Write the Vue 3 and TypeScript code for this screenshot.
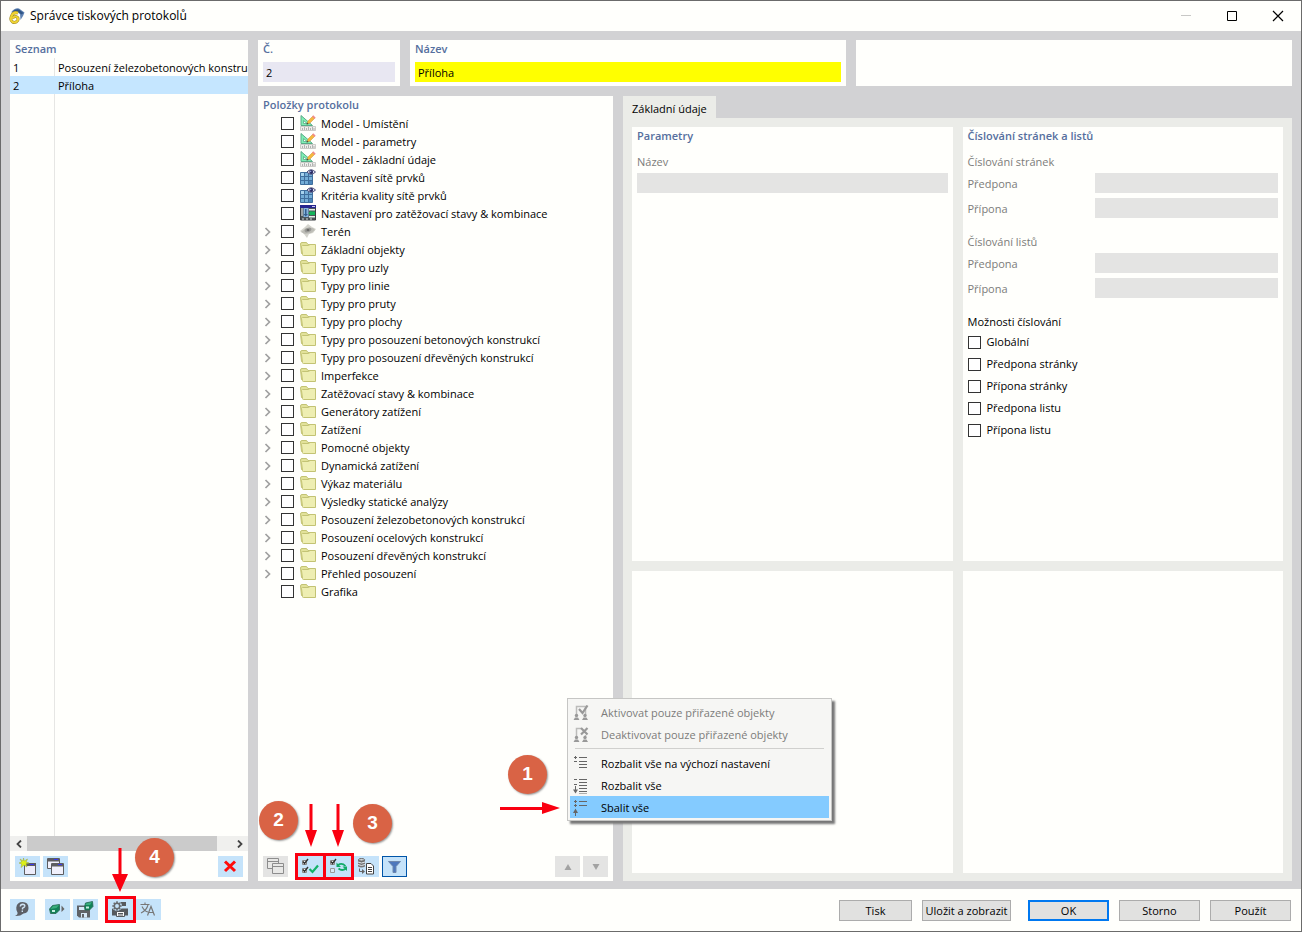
<script setup lang="ts">
import { ref } from 'vue'

interface TreeItem {
  label: string
  icon: string
  expandable: boolean
  checked: boolean
}

interface ReportRow {
  id: number
  name: string
}

const leaf = (label: string, icon: string): TreeItem => ({ label, icon, expandable: false, checked: false })
const branch = (label: string, icon = 'folder'): TreeItem => ({ label, icon, expandable: true, checked: false })

const reports: ReportRow[] = [
  { id: 1, name: 'Posouzení železobetonových konstrukcí' },
  { id: 2, name: 'Příloha' },
]
const selected = ref(2)
const reportName = ref('Příloha')

const items = ref<TreeItem[]>([
  leaf('Model - Umístění', 'model'),
  leaf('Model - parametry', 'model'),
  leaf('Model - základní údaje', 'model'),
  leaf('Nastavení sítě prvků', 'mesh'),
  leaf('Kritéria kvality sítě prvků', 'mesh'),
  leaf('Nastavení pro zatěžovací stavy & kombinace', 'loads'),
  branch('Terén', 'terrain'),
  branch('Základní objekty'),
  branch('Typy pro uzly'),
  branch('Typy pro linie'),
  branch('Typy pro pruty'),
  branch('Typy pro plochy'),
  branch('Typy pro posouzení betonových konstrukcí'),
  branch('Typy pro posouzení dřevěných konstrukcí'),
  branch('Imperfekce'),
  branch('Zatěžovací stavy & kombinace'),
  branch('Generátory zatížení'),
  branch('Zatížení'),
  branch('Pomocné objekty'),
  branch('Dynamická zatížení'),
  branch('Výkaz materiálu'),
  branch('Výsledky statické analýzy'),
  branch('Posouzení železobetonových konstrukcí'),
  branch('Posouzení ocelových konstrukcí'),
  branch('Posouzení dřevěných konstrukcí'),
  branch('Přehled posouzení'),
  leaf('Grafika', 'folder'),
])

const numberingGroups = [
  { id: 'pages', title: 'Číslování stránek' },
  { id: 'sheets', title: 'Číslování listů' },
]
const numberingOptions = ref([
  { label: 'Globální', checked: false },
  { label: 'Předpona stránky', checked: false },
  { label: 'Přípona stránky', checked: false },
  { label: 'Předpona listu', checked: false },
  { label: 'Přípona listu', checked: false },
])
</script>

<template>
  <div class="window">
    <svg class="sprite" aria-hidden="true">
      <symbol id="i-model" viewBox="0 0 16 16">
        <path d="M1 0.5V10.5H12.5Z" fill="#7ff0b4" stroke="#5aaa88" />
        <path d="M3.500 5.500V8.500H7Z" fill="#fffffc" stroke="#5aaa88" stroke-width=".8" />
        <path d="M7 9L8 6L12.500 1.500L14.500 3.500L10 8Z" fill="#f6b93d" stroke="#c98f2f" stroke-width=".5" />
        <path d="M12 1.500L13.300 .3L15.700 2.700L14.500 4Z" fill="#f08a8a" />
        <path d="M6.500 9.500L7 7.500L8.700 9Z" fill="#444" />
        <path d="M.5 11.500H15.500V15.500H.5Z" fill="#efefec" stroke="#c0c0bd" stroke-width=".8" />
        <path d="M2.500 13V15M4.500 12V15M6.500 13V15M8.500 12V15M10.500 13V15M12.500 12V15M14 13V15" stroke="#999" stroke-width=".7" />
      </symbol>
      <symbol id="i-mesh" viewBox="0 0 16 16">
        <path d="M.5 3.500H12.500V15.500H.5Z" fill="#74add6" stroke="#3f6f9d" />
        <path d="M1 4H4V7H1Z" fill="#a8d4ee" />
        <path d="M9 12H12V15H9Z" fill="#4c86ba" />
        <path d="M4.500 3.500V15.500M8.500 3.500V15.500M.5 7.500H12.500M.5 11.500H12.500" stroke="#3f6f9d" />
        <path d="M7 3Q11 -1.500 15.500 3Q11 7.500 7 3Z" fill="#dfe2f2" stroke="#4a4c78" />
        <circle cx="11.200" cy="3" r="1.900" fill="#23255c" />
        <circle cx="10.700" cy="2.500" r=".7" fill="#98a8e8" />
      </symbol>
      <symbol id="i-loads" viewBox="0 0 16 16">
        <path d="M.5 1.500H15.500V15H.5Z" fill="#4d565b" stroke="#3b3f42" />
        <path d="M0 0H16V3H0Z" fill="#26268f" />
        <path d="M12 1H15V2H12Z" fill="#c9c9ee" />
        <path d="M1 3H3V11H1Z" fill="#9da4a8" />
        <path d="M3.500 3H8.500V12H3.500Z" fill="#86b4df" />
        <path d="M5 4H6.500V9H8L5.700 11.500L3.500 9H5Z" fill="#355f8d" />
        <path d="M9 4H15V5.500H9ZM9 11H15V12.500H9Z" fill="#e6eeea" />
        <path d="M8.500 8.200L11 5.700V6.500H15V10H11V10.800Z" fill="#13b45b" />
        <path d="M2 13.500H4V14.500H2ZM6 13.500H8V14.500H6ZM10 13.500H12V14.500H10Z" fill="#d8dcdd" />
      </symbol>
      <symbol id="i-terrain" viewBox="0 0 16 16">
        <path d="M0 8L5 4L8 1L12 4L16 6L13 10L9 11L7 15L4 11Z" fill="#d4d4cd" />
        <path d="M1 9L6 5L13 5L15 7L11 10L5 11Z" fill="#bdbdb6" />
        <ellipse cx="8" cy="7" rx="3.500" ry="2.200" fill="#999995" transform="rotate(-20 8 7)" />
        <ellipse cx="8" cy="7" rx="1.500" ry="1" fill="#686866" />
      </symbol>
      <symbol id="i-folder" viewBox="0 0 16 16">
        <path d="M1.500 12.500L.5 3Q.5 1.500 2 1.500H6.500L8 3.500H14.500V12.500Z" fill="#e2e29a" stroke="#c3c374" />
        <path d="M3.500 14.500Q2.500 14.500 2.500 13.500L1.500 5.500Q1.500 4.500 2.500 4.500H8.500L10 3.500H15.500V14.500Z" fill="#eeeeb2" stroke="#c3c374" />
      </symbol>
      <symbol id="i-copy" viewBox="0 0 17 17">
        <path d="M.5 .5H12.500V10.500H.5Z" fill="#f0f0fb" stroke="#5d5d60" />
        <path d="M1 1H12V3.500H1Z" fill="#5d5d60" />
        <path d="M7 1H11V2H7Z" fill="#3a3af0" />
        <path d="M4.500 5.500H16.500V16.500H4.500Z" fill="#f0f0fb" stroke="#5d5d60" />
        <path d="M5 6H16V8.500H5Z" fill="#5d5d60" />
        <path d="M11 6H15V7H11Z" fill="#3a3af0" />
      </symbol>
      <symbol id="i-copy-off" viewBox="0 0 17 17">
        <path d="M.5 .5H11.500V10.500H.5ZM.5 3.500H11.500" fill="#e8e8e6" stroke="#8d8d8d" />
        <path d="M5.500 5.500H16.500V15.500H5.500ZM5.500 8.500H16.500" fill="#e8e8e6" stroke="#8d8d8d" />
      </symbol>
      <symbol id="i-new" viewBox="0 0 17 17">
        <path d="M5.500 5.500H16.500V16.500H5.500Z" fill="#ededfb" stroke="#5d5d60" />
        <path d="M5 5H17V8H5Z" fill="#5d5d60" />
        <path d="M11 6H15V7H11Z" fill="#3a3af0" />
        <path d="M4.500 0L5.300 3L8.500 1L7 4L10 5L7 5.700L8 9L5 7L2 9.500L2.700 6L0 5L2.700 4L1 1L4 3Z" fill="#dcf018" stroke="#98a53a" stroke-width=".5" />
      </symbol>
      <symbol id="i-delete" viewBox="0 0 17 17">
        <path d="M3 3.500L13 13M13 3.500L3 13" stroke="#ff0c0c" stroke-width="3" />
      </symbol>
      <symbol id="i-check-all" viewBox="0 0 17 17">
        <path d="M.5 2.500H4.500V6.500H.5ZM.5 10.500H4.500V14.500H.5Z" fill="#fff" stroke="#888" />
        <path d="M1 3.500L2.500 5.500L6 1M1 11.500L2.500 13.500L6 9" fill="none" stroke="#333" stroke-width="1.400" />
        <path d="M7.500 11L10.500 14L16 7.500" fill="none" stroke="#12b268" stroke-width="2.200" />
      </symbol>
      <symbol id="i-invert" viewBox="0 0 17 17">
        <path d="M.5 2.500H4.500V6.500H.5Z" fill="#fff" stroke="#888" />
        <path d="M1 3.500L2.500 5.500L6 1" fill="none" stroke="#333" stroke-width="1.400" />
        <path d="M.5 10.500H4.500V14.500H.5Z" fill="#d7e8f4" stroke="#999" />
        <path d="M8 7Q12 4.500 15.500 8M16 10.500Q12 13.500 8.500 10.500" fill="none" stroke="#12ab69" stroke-width="1.700" />
        <path d="M6.500 4.500V9H11ZM17 13V8.500H12.500Z" fill="#12ab69" />
      </symbol>
      <symbol id="i-database" viewBox="0 0 17 17">
        <path d="M0 1.800V8.500Q3.500 10.500 7 8.500V1.800Z" fill="#777" />
        <ellipse cx="3.500" cy="1.800" rx="3" ry="1.300" fill="#cfd5d8" stroke="#666" />
        <path d="M0 4Q3.500 6 7 4M0 6.500Q3.500 8.500 7 6.500" fill="none" stroke="#e0e8ee" />
        <path d="M1.500 10.500V13.500H5" fill="none" stroke="#666" />
        <path d="M4 11L7 13.500L4 16Z" fill="#666" />
        <path d="M8.500 5.500H13L15.500 8V16H8.500Z" fill="#fff" stroke="#444" />
        <path d="M10 9.500H14M10 11.500H14M10 13.500H14" stroke="#444" />
      </symbol>
      <symbol id="i-filter" viewBox="0 0 17 17">
        <path d="M2.500 3.500H14.500L10 8.500V14.500H7V8.500Z" fill="#4d78bd" stroke="#6f88ad" />
      </symbol>
      <symbol id="i-up" viewBox="0 0 8 8"><path d="M4 1L7.500 7H.5Z" fill="#a2a2a2" /></symbol>
      <symbol id="i-down" viewBox="0 0 8 8"><path d="M4 7L7.500 1H.5Z" fill="#a2a2a2" /></symbol>
      <symbol id="i-help" viewBox="0 0 17 17">
        <path d="M8.500 1Q14.500 1 14.500 7Q14.500 12 9.500 12.500Q6 15.500 1 15Q4 13.500 3.500 11.500Q2 9.500 2.300 6.500Q3 1 8.500 1Z" fill="#5c5f66" />
        <path d="M6.300 5.500Q6.500 3.300 8.700 3.300Q11 3.500 10.800 5.200Q10.500 6.500 8.500 7.200V8.500M8.300 9.500V11" fill="none" stroke="#cfe4f5" stroke-width="1.400" />
      </symbol>
      <symbol id="i-send" viewBox="0 0 17 17">
        <path d="M.5 8L3.500 4.500L10.500 3.500V9L7 12.500H1.500Z" fill="#128257" stroke="#276650" stroke-width=".8" />
        <path d="M4 5L10 4L7.500 7L1.500 8Z" fill="#39ad7c" />
        <path d="M3 9H6V11H3Z" fill="#c4efe0" />
        <path d="M12.500 4.500L15.500 8L12.500 11Z" fill="#666" />
      </symbol>
      <symbol id="i-save" viewBox="0 0 17 17">
        <path d="M0 4.500H13V16.500H2L0 14.500Z" fill="#5f6368" />
        <path d="M2 6H10V9H2ZM4 12H10V16.500H4Z" fill="#d6e9f8" />
        <path d="M5 13H7V16.500H5Z" fill="#5f6368" />
        <path d="M7.500 6L8.500 2L15.500 .5L16 5.500L12.500 9H8Z" fill="#128257" stroke="#276650" stroke-width=".8" />
        <path d="M9 2.500L15 1L13 4H8.500Z" fill="#39ad7c" />
        <path d="M9 5.500H12V7.500H9Z" fill="#c4efe0" />
      </symbol>
      <symbol id="i-printer" viewBox="0 0 17 17">
        <path d="M7 1H14V5H7ZM0 7.500H16V14.500H13V11H4V14.500H0Z" fill="#56595d" />
        <path d="M4.500 10.500H12.500V15.500H4.500Z" fill="#fafafa" stroke="#56595d" />
        <path d="M6 12.500H11M6 14H11" stroke="#56595d" />
        <circle cx="5" cy="5" r="5" fill="#c5e3fa" />
        <circle cx="5" cy="5" r="2.700" fill="none" stroke="#66696d" stroke-width="1.500" />
        <path d="M5 .3V2M5 8V9.700M.3 5H2M8 5H9.700M1.700 1.700L3 3M7 7L8.300 8.300M8.300 1.700L7 3M3 7L1.700 8.300" stroke="#66696d" stroke-width="1.600" />
      </symbol>
      <symbol id="i-translate" viewBox="0 0 17 17">
        <path d="M.5 3.500H9.500M5 1.500V3.500M2 5.500Q4.500 10.500 8 11M8 4Q6.500 9.500 1 12" fill="none" stroke="#777" stroke-width="1.100" />
        <path d="M7.500 14.500L11 5.500L14.500 14.500M9 11.500H13" fill="none" stroke="#777" stroke-width="1.200" />
      </symbol>
      <symbol id="i-activate" viewBox="0 0 16 16">
        <path d="M3.500 10V1.500H12.500V10" fill="none" stroke="#bcbcba" stroke-width="1.500" />
        <path d="M6 4L9.500 8L14.500 .5" fill="none" stroke="#999" stroke-width="2.200" />
        <circle cx="3.500" cy="10.500" r="1.700" fill="#999" /><circle cx="12" cy="10.500" r="1.700" fill="#999" />
        <path d="M.5 15L2 12.500H5L6.500 15ZM9 15L10.500 12.500H13.500L15 15Z" fill="#999" />
      </symbol>
      <symbol id="i-deactivate" viewBox="0 0 16 16">
        <path d="M3.500 10V1.500H8M12.500 8V10" fill="none" stroke="#bcbcba" stroke-width="1.500" />
        <path d="M8 1L14.500 7.500M14.500 1L8 7.500" fill="none" stroke="#999" stroke-width="2.200" />
        <circle cx="3.500" cy="10.500" r="1.700" fill="#999" /><circle cx="12" cy="10.500" r="1.700" fill="#999" />
        <path d="M.5 15L2 12.500H5L6.500 15ZM9 15L10.500 12.500H13.500L15 15Z" fill="#999" />
      </symbol>
      <symbol id="i-expand-default" viewBox="0 0 16 16">
        <path d="M1 1.500H4M2.500 0V3M1 5.500H4M6 1.500H14M6 5.500H14M6 8.500H14M6 11.500H14" stroke="#666" />
      </symbol>
      <symbol id="i-expand" viewBox="0 0 16 16">
        <path d="M1 1.500H4M6 1.500H14M1 6.500H4M6 4.500H14M6 7.500H14M6 10.500H14M6 13.500H14M6 16H14M2.500 8V13" stroke="#666" />
        <path d="M0 11.500H5L2.500 15.500Z" fill="#666" />
      </symbol>
      <symbol id="i-collapse" viewBox="0 0 16 16">
        <path d="M1 1.500H4M2.500 0V3M6 1.500H14M1 5.500H4M2.500 4V7M6 5.500H14M2.500 10V16" stroke="#666" />
        <path d="M0 13H5L2.500 8.500Z" fill="#666" />
      </symbol>
    </svg>

    <header class="titlebar">
      <svg class="app-icon" viewBox="0 0 16 16" aria-hidden="true">
        <path d="M2 4.500Q6 -.5 10 .5L15.500 4.500L14 8L11.500 12L11 6L7 3.500Z" fill="#5f83b3" />
        <path d="M3.500 3.500Q7 .5 10 1.500L14.500 5L12.500 6.500L9 4Z" fill="#2f5586" />
        <path d="M9 5Q4.500 3.500 2.500 8Q.8 12.500 3.500 14Q7 15.300 8.700 12.500Q9.800 9.300 7 8.600Q4.500 8.300 3.500 10.500" fill="none" stroke="#a08a2a" stroke-width="3" />
        <path d="M9 5Q4.500 3.500 2.500 8Q.8 12.500 3.500 14Q7 15.300 8.700 12.500Q9.800 9.300 7 8.600Q4.500 8.300 3.500 10.500" fill="none" stroke="#f0d432" stroke-width="2" />
      </svg>
      <h1>Správce tiskových protokolů</h1>
      <div class="window-controls">
        <button type="button" aria-label="Minimalizovat" disabled><svg viewBox="0 0 12 12"><path d="M1 5.500H11" stroke="#c8c8c6" /></svg></button>
        <button type="button" aria-label="Maximalizovat"><svg viewBox="0 0 12 12"><path d="M1.500 1.500H10.500V10.500H1.500Z" fill="none" stroke="#000" /></svg></button>
        <button type="button" aria-label="Zavřít"><svg viewBox="0 0 12 12"><path d="M1 1L11 11M11 1L1 11" stroke="#000" stroke-width="1.200" /></svg></button>
      </div>
    </header>

    <main class="workspace">
      <section class="panel list-panel">
        <h2>Seznam</h2>
        <div class="list">
          <table>
            <tbody>
              <tr v-for="row in reports" :key="row.id" :class="{ active: row.id === selected }" @click="selected = row.id">
                <td class="num">{{ row.id }}</td>
                <td>{{ row.name }}</td>
              </tr>
            </tbody>
          </table>
        </div>
        <div class="scrollbar">
          <button type="button" aria-label="Posunout vlevo"><svg viewBox="0 0 8 8"><path d="M6 .5L2.500 4L6 7.500" fill="none" stroke="#444" stroke-width="1.800" /></svg></button>
          <div class="track"><div class="thumb"></div></div>
          <button type="button" aria-label="Posunout vpravo"><svg viewBox="0 0 8 8"><path d="M2 .5L5.500 4L2 7.500" fill="none" stroke="#444" stroke-width="1.800" /></svg></button>
        </div>
        <div class="toolbar">
          <button class="tool" type="button" aria-label="Nový protokol"><svg><use href="#i-new" /></svg></button>
          <button class="tool" type="button" aria-label="Kopírovat protokol"><svg><use href="#i-copy" /></svg></button>
          <span class="spacer"></span>
          <button class="tool" type="button" aria-label="Smazat"><svg><use href="#i-delete" /></svg></button>
        </div>
      </section>

      <div class="content">
        <div class="top-row">
          <section class="panel field">
            <label for="report-number">Č.</label>
            <input id="report-number" class="number" value="2" readonly />
          </section>
          <section class="panel field">
            <label for="report-name">Název</label>
            <input id="report-name" v-model="reportName" class="name" />
          </section>
          <section class="panel"></section>
        </div>

        <div class="lower-row">
          <section class="panel tree-panel">
            <h2>Položky protokolu</h2>
            <ul class="tree">
              <li v-for="item in items" :key="item.label">
                <button v-if="item.expandable" class="expander" type="button" :aria-label="'Rozbalit ' + item.label">
                  <svg viewBox="0 0 8 10"><path d="M1.500 1L5.500 5L1.500 9" fill="none" stroke="#a0a0a0" stroke-width="1.700" /></svg>
                </button>
                <span v-else class="expander"></span>
                <label>
                  <input v-model="item.checked" type="checkbox" />
                  <svg class="item-icon"><use :href="'#i-' + item.icon" /></svg>
                  <span>{{ item.label }}</span>
                </label>
              </li>
            </ul>
            <div class="toolbar">
              <button class="tool off wide-gap" type="button" aria-label="Kopírovat" disabled><svg><use href="#i-copy-off" /></svg></button>
              <button class="tool marked" type="button" aria-label="Vybrat vše"><svg><use href="#i-check-all" /></svg></button>
              <button class="tool marked" type="button" aria-label="Obrátit výběr"><svg><use href="#i-invert" /></svg></button>
              <button class="tool" type="button" aria-label="Načíst z databáze"><svg><use href="#i-database" /></svg></button>
              <button class="tool pressed" type="button" aria-label="Filtr"><svg><use href="#i-filter" /></svg></button>
              <span class="spacer"></span>
              <button class="tool off small" type="button" aria-label="Nahoru" disabled><svg><use href="#i-up" /></svg></button>
              <button class="tool off small" type="button" aria-label="Dolů" disabled><svg><use href="#i-down" /></svg></button>
            </div>

            <svg class="arrow a2" viewBox="0 0 12 44"><path d="M4.500 1H7.500V27H12L6 44L0 27H4.500Z" /></svg>
            <svg class="arrow a3" viewBox="0 0 12 44"><path d="M4.500 1H7.500V27H12L6 44L0 27H4.500Z" /></svg>
            <svg class="arrow a1" viewBox="0 0 60 12"><path d="M0 5H42V0L60 6L42 12V8H0Z" /></svg>
            <span class="badge b1">1</span>
            <span class="badge b2">2</span>
            <span class="badge b3">3</span>

            <div class="menu" role="menu">
              <button type="button" role="menuitem" disabled><svg><use href="#i-activate" /></svg>Aktivovat pouze přiřazené objekty</button>
              <button type="button" role="menuitem" disabled><svg><use href="#i-deactivate" /></svg>Deaktivovat pouze přiřazené objekty</button>
              <hr />
              <button type="button" role="menuitem"><svg><use href="#i-expand-default" /></svg>Rozbalit vše na výchozí nastavení</button>
              <button type="button" role="menuitem"><svg><use href="#i-expand" /></svg>Rozbalit vše</button>
              <button type="button" role="menuitem" class="current"><svg><use href="#i-collapse" /></svg>Sbalit vše</button>
            </div>
          </section>

          <div class="details">
            <button class="tab" type="button">Základní údaje</button>
            <div class="cards">
              <section class="card">
                <h2>Parametry</h2>
                <div class="stack">
                  <label for="param-name">Název</label>
                  <input id="param-name" class="disabled" disabled />
                </div>
              </section>
              <section class="card">
                <h2>Číslování stránek a listů</h2>
                <div v-for="group in numberingGroups" :key="group.id" class="group">
                  <h3>{{ group.title }}</h3>
                  <div class="pair">
                    <label :for="group.id + '-prefix'">Předpona</label>
                    <input :id="group.id + '-prefix'" class="disabled" disabled />
                  </div>
                  <div class="pair">
                    <label :for="group.id + '-suffix'">Přípona</label>
                    <input :id="group.id + '-suffix'" class="disabled" disabled />
                  </div>
                </div>
                <div class="options">
                  <h3>Možnosti číslování</h3>
                  <label v-for="option in numberingOptions" :key="option.label">
                    <input v-model="option.checked" type="checkbox" />
                    <span>{{ option.label }}</span>
                  </label>
                </div>
              </section>
              <section class="card"></section>
              <section class="card"></section>
            </div>
          </div>
        </div>
      </div>
    </main>

    <footer class="footer">
      <div class="footer-tools">
        <button class="tool wide-gap" type="button" aria-label="Nápověda"><svg><use href="#i-help" /></svg></button>
        <button class="tool" type="button" aria-label="Odeslat"><svg><use href="#i-send" /></svg></button>
        <button class="tool wide-gap" type="button" aria-label="Uložit"><svg><use href="#i-save" /></svg></button>
        <button class="tool marked" type="button" aria-label="Nastavení tisku"><svg><use href="#i-printer" /></svg></button>
        <button class="tool" type="button" aria-label="Jazyk"><svg><use href="#i-translate" /></svg></button>
      </div>
      <div class="actions">
        <button type="button">Tisk</button>
        <button type="button" class="save">Uložit a zobrazit</button>
        <button type="button" class="primary">OK</button>
        <button type="button">Storno</button>
        <button type="button">Použít</button>
      </div>
      <svg class="arrow a4" viewBox="0 0 16 44"><path d="M6.500 0H9.500V26H16L8 44L0 26H6.500Z" /></svg>
      <span class="badge b4">4</span>
    </footer>
  </div>
</template>

<style>
body {
  margin: 0;
}
</style>

<style scoped>
.window {
  --paper: #fffffc;
  --frame: #d2d2d4;
  --page: #ebece8;
  --heading: #566f9e;
  --tool: #c5e3fa;
  display: flex;
  flex-direction: column;
  box-sizing: border-box;
  min-height: 100vh;
  border: 1px solid #6b6b6b;
  background: var(--paper);
  color: #000;
  font-family: "Open Sans", "Noto Sans", sans-serif;
  font-size: 11px;
  line-height: 18px;
}
.window *,
.window *::before {
  box-sizing: border-box;
}
.sprite {
  position: absolute;
  width: 0;
  height: 0;
}
button,
input {
  margin: 0;
  padding: 0;
  border: 0;
  background: none;
  color: inherit;
  font: inherit;
}
h1,
h2,
h3 {
  margin: 0;
  font-size: inherit;
  font-weight: 400;
}
h2,
.field label {
  color: var(--heading);
  font-weight: 600;
}
svg {
  display: block;
}

.titlebar {
  display: flex;
  align-items: center;
  height: 30px;
  padding-left: 8px;
}
.app-icon {
  width: 16px;
  height: 16px;
  margin-right: 5px;
}
h1 {
  flex: 1;
  font-size: 12px;
}
.window-controls {
  display: flex;
}
.window-controls button {
  display: grid;
  place-items: center;
  width: 46px;
  height: 29px;
}
.window-controls svg {
  width: 12px;
  height: 12px;
}

.workspace {
  flex: 1;
  display: grid;
  grid-template-columns: 238px minmax(0, 1fr);
  gap: 10px;
  padding: 9px 9px 8px;
  background: var(--frame);
}
.panel {
  background: var(--paper);
}
.list-panel {
  display: flex;
  flex-direction: column;
  min-width: 0;
}
.list-panel h2 {
  padding-left: 5px;
}
.list {
  flex: 1;
  overflow: hidden;
  background: linear-gradient(#e6e6e4, #e6e6e4) 44px 0 / 1px 100% no-repeat;
}
table {
  width: 100%;
  border-collapse: collapse;
  table-layout: fixed;
}
td {
  height: 18px;
  padding: 1px 0 0 4px;
  overflow: hidden;
  line-height: 17px;
  white-space: nowrap;
}
td.num {
  width: 44px;
  padding-left: 3px;
}
tr.active {
  background: #c5e6ff;
}
.scrollbar {
  display: grid;
  grid-template-columns: 17px 1fr 17px;
  height: 15px;
  background: #f0f0ee;
}
.scrollbar button {
  display: grid;
  place-items: center;
}
.scrollbar svg {
  width: 8px;
  height: 8px;
}
.thumb {
  width: 93%;
  height: 100%;
  background: #cbcbcb;
}
.toolbar {
  display: flex;
  gap: 3px;
  padding: 5px 5px 4px;
}
.spacer {
  flex: 1;
}
.tool {
  display: grid;
  place-items: center;
  position: relative;
  width: 25px;
  height: 21px;
  background: var(--tool);
}
.tool svg {
  width: 17px;
  height: 17px;
}
.tool.off {
  background: #e4e4e3;
}
.tool.small svg {
  width: 8px;
  height: 8px;
}
.tool.pressed {
  border: 1px solid #0055a8;
}
.tool.wide-gap {
  margin-right: 7px;
}
.tool.marked::before {
  content: "";
  position: absolute;
  inset: -3px;
  border: 3px solid #fa0010;
}

.content {
  display: flex;
  flex-direction: column;
  gap: 10px;
  min-width: 0;
}
.top-row {
  display: grid;
  grid-template-columns: 142px 1fr 1fr;
  gap: 10px;
  height: 46px;
}
.field {
  padding: 0 5px;
}
.field label {
  display: block;
  height: 22px;
}
.field input {
  display: block;
  width: 100%;
  height: 20px;
  padding: 1px 3px 0;
}
.number {
  background: #e8e7f2;
}
.name {
  background: #ff0;
}
.lower-row {
  flex: 1;
  display: grid;
  grid-template-columns: 355px minmax(0, 1fr);
  gap: 10px;
}
.tree-panel {
  position: relative;
  display: flex;
  flex-direction: column;
}
.tree-panel h2 {
  height: 19px;
  padding-left: 5px;
}
.tree {
  flex: 1;
  margin: 0;
  padding: 0;
  list-style: none;
}
.tree li {
  display: flex;
  height: 18px;
}
.expander {
  display: grid;
  place-items: center;
  width: 20px;
  height: 17px;
  margin-right: 3px;
}
.expander svg {
  width: 8px;
  height: 10px;
}
.tree label {
  display: flex;
  align-items: flex-start;
}
input[type="checkbox"] {
  appearance: none;
  flex: none;
  width: 13px;
  height: 13px;
  border: 1px solid #333;
  background: #fff;
}
input[type="checkbox"]:checked {
  background: #333;
}
.tree input[type="checkbox"] {
  margin-top: 2px;
}
.item-icon {
  width: 16px;
  height: 16px;
  margin: 0 5px 0 6px;
}

.menu {
  position: absolute;
  left: 309px;
  bottom: 60px;
  z-index: 2;
  width: 265px;
  padding: 2px;
  border: 1px solid #c6c6c4;
  background: #f6f6f4;
  box-shadow: 3px 3px 2px #777;
}
.menu button {
  display: flex;
  align-items: center;
  width: 100%;
  height: 22px;
  padding: 2px 0 0 3px;
  white-space: nowrap;
}
.menu button:disabled {
  color: #7c7c7a;
}
.menu button.current {
  background: #84cbff;
}
.menu svg {
  width: 16px;
  height: 16px;
  margin-right: 12px;
}
.menu hr {
  margin: 3px 5px;
  border: 0;
  border-top: 1px solid #d0d0ce;
}

.details {
  display: flex;
  flex-direction: column;
  align-items: flex-start;
}
.tab {
  height: 22px;
  padding: 4px 9px 0;
  background: var(--page);
}
.cards {
  flex: 1;
  display: grid;
  grid-template-columns: 1fr 1fr;
  grid-template-rows: 434fr 302fr;
  gap: 10px;
  width: 100%;
  padding: 9px 9px 8px;
  background: var(--page);
}
.card {
  padding: 0 5px;
  background: var(--paper);
}
.card h2 {
  margin-bottom: 8px;
}
.stack {
  display: grid;
  gap: 2px;
  color: #7c7c7a;
}
.stack input {
  width: 100%;
}
.group {
  margin-bottom: 15px;
  color: #7c7c7a;
}
.group h3 {
  margin-bottom: 2px;
}
.pair {
  display: grid;
  grid-template-columns: 127px 1fr;
  align-items: center;
  margin-bottom: 5px;
}
.pair label {
  padding-top: 2px;
}
.pair input {
  width: 100%;
}
.disabled {
  height: 20px;
  background: #e4e4e3;
}
.options label {
  display: flex;
  align-items: center;
  gap: 6px;
  height: 22px;
}

.footer {
  position: relative;
  display: flex;
  justify-content: space-between;
  height: 42px;
  padding: 10px 10px 0 9px;
}
.footer-tools {
  display: flex;
  gap: 3px;
}
.actions {
  display: flex;
  gap: 10px;
  padding-top: 1px;
}
.actions button {
  width: 81px;
  height: 21px;
  border: 1px solid #acacac;
  background: #e1e1e0;
  white-space: nowrap;
}
.actions button:first-child {
  width: 73px;
}
.actions button.save {
  width: 89px;
}
.actions button.primary {
  margin-left: 7px;
  border: 2px solid #0078f0;
}

.badge {
  position: absolute;
  z-index: 3;
  width: 39px;
  height: 39px;
  border-radius: 50%;
  background: #d96345;
  box-shadow: 1px 1px 2px #999;
  color: #fff;
  font-family: "Liberation Sans", Arial, sans-serif;
  font-size: 19px;
  font-weight: 700;
  line-height: 38px;
  text-align: center;
}
.b1 { left: 250px; bottom: 87px; }
.b2 { left: 1px; bottom: 41px; }
.b3 { left: 95px; bottom: 38px; }
.b4 { left: 134px; bottom: 54px; }
.arrow {
  position: absolute;
  z-index: 3;
  fill: #fa0010;
}
.a1 { left: 242px; bottom: 67px; width: 60px; height: 12px; }
.a2 { left: 47px; bottom: 34px; width: 12px; height: 44px; }
.a3 { left: 74px; bottom: 34px; width: 12px; height: 44px; }
.a4 { left: 111px; bottom: 39px; width: 16px; height: 44px; }
</style>
